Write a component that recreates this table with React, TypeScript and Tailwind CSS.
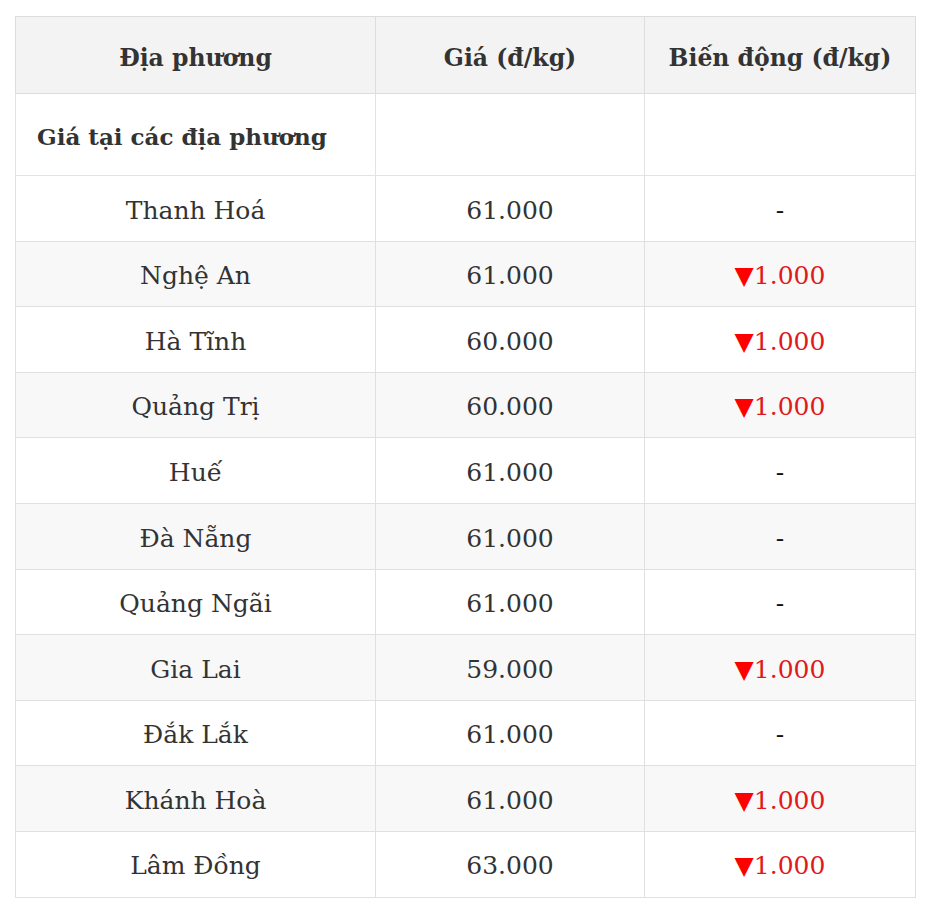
import React from "react";

const rows: [string, string, string | null][] = [
  ["Thanh Hoá", "61.000", null],
  ["Nghệ An", "61.000", "1.000"],
  ["Hà Tĩnh", "60.000", "1.000"],
  ["Quảng Trị", "60.000", "1.000"],
  ["Huế", "61.000", null],
  ["Đà Nẵng", "61.000", null],
  ["Quảng Ngãi", "61.000", null],
  ["Gia Lai", "59.000", "1.000"],
  ["Đắk Lắk", "61.000", null],
  ["Khánh Hoà", "61.000", "1.000"],
  ["Lâm Đồng", "63.000", "1.000"],
];

export default function App() {
  return (
    <div
      className="bg-white min-h-[914px] pt-4 pl-[15px] pr-[13px] text-[#333]"
      style={{ fontFamily: '"DejaVu Serif", "Liberation Serif", serif' }}
    >
      <table className="w-[900px] border-collapse table-fixed text-[25px]">
        <colgroup>
          <col className="w-[360px]" />
          <col className="w-[269px]" />
          <col className="w-[271px]" />
        </colgroup>
        <thead>
          <tr className="bg-[#f3f3f3] h-[77px] text-[23.5px]">
            <th className="border border-[#dddddd] font-bold text-center pt-[8px]">Địa phương</th>
            <th className="border border-[#dddddd] font-bold text-center pt-[8px]">Giá (đ/kg)</th>
            <th className="border border-[#dddddd] font-bold text-center pt-[8px]">Biến động (đ/kg)</th>
          </tr>
        </thead>
        <tbody>
          <tr className="h-[82px] bg-white">
            <td className="border border-[#e3e3e3] font-bold text-left pl-[21px] pt-[6px] text-[23px]">Giá tại các địa phương</td>
            <td className="border-y border-[#e3e3e3]"></td>
            <td className="border border-[#e3e3e3]"></td>
          </tr>
          {rows.map(([name, price, change], i) => (
            <tr key={name} className={`h-[65.6px] ${i % 2 === 1 ? "bg-[#f8f8f8]" : "bg-white"}`}>
              <td className="border border-[#e0e0e0] text-center pt-[4px]">{name}</td>
              <td className="border border-[#e0e0e0] text-center pt-[4px]">{price}</td>
              <td className="border border-[#e0e0e0] text-center pt-[4px]">
                {change ? (
                  <span className="text-[#e0191b]">
                    <span className="text-[#ff0000]">▼</span>
                    {change}
                  </span>
                ) : (
                  <span className="text-[#111]">-</span>
                )}
              </td>
            </tr>
          ))}
        </tbody>
      </table>
    </div>
  );
}
